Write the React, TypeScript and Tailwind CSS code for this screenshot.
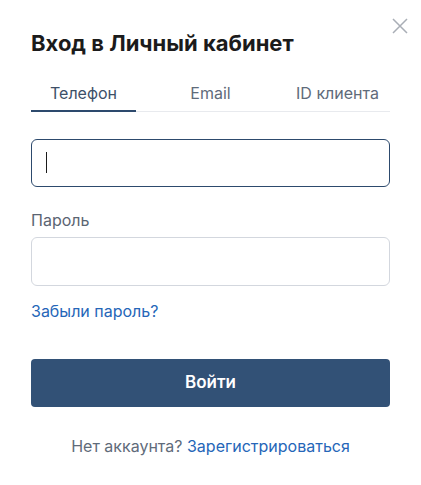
import React, { useState } from 'react';

type Tab = 'phone' | 'email' | 'id';

const tabs: { key: Tab; label: string }[] = [
  { key: 'phone', label: 'Телефон' },
  { key: 'email', label: 'Email' },
  { key: 'id', label: 'ID клиента' },
];

export default function App() {
  const [active, setActive] = useState<Tab>('phone');
  const [login, setLogin] = useState('');
  const [password, setPassword] = useState('');

  return (
    <div className="relative min-h-[485px] w-[421px] bg-white font-['Inter',sans-serif]">
      {/* Закрыть */}
      <button type="button" className="absolute right-[12px] top-[17px] p-[1px] text-[#a9aeb6]" aria-label="Закрыть">
        <svg width="16" height="16" viewBox="0 0 16 16" fill="none" stroke="currentColor" strokeWidth="1.5">
          <path d="M1 1l14 14M15 1L1 15" />
        </svg>
      </button>

      <div className="px-[31px] pt-[29px]">
        <h2 className="text-[22px] font-bold leading-[28px] text-[#1b1b1b]">Вход в Личный кабинет</h2>

        {/* Табы */}
        <div className="mt-[26px] flex justify-between border-b border-[#e8eaee]">
          {tabs.map(t => (
            <button
              key={t.key}
              type="button"
              onClick={() => setActive(t.key)}
              className={`-mb-px w-[105px] border-b-2 pb-[7px] text-[16px] leading-[20px] ${
                active === t.key ? 'border-[#2d4a6d] text-[#3d5068]' : 'border-transparent text-[#5f6b7a]'
              }`}
            >
              {t.label}
            </button>
          ))}
        </div>

        {/* Логин (в фокусе) */}
        <div className="relative mt-[27px]">
          <input
            type="text"
            value={login}
            onChange={e => setLogin(e.target.value)}
            className="block h-[48px] w-full rounded-[6px] border border-[#2d4a6d] px-[14px] text-[18px] text-[#1b1b1b] outline-none"
          />
          {!login && <span className="pointer-events-none absolute left-[15px] top-[13px] h-[21px] w-px bg-[#1b1b1b]" />}
        </div>

        <label className="mt-[23px] block text-[16px] leading-[20px] text-[#5b6572]">Пароль</label>
        <input
          type="password"
          value={password}
          onChange={e => setPassword(e.target.value)}
          className="mt-[7px] block h-[49px] w-full rounded-[6px] border border-[#d3d7de] px-[14px] text-[16px] outline-none"
        />

        <a href="#" className="mt-[15px] block w-fit text-[16px] leading-[20px] text-[#2566b8]">
          Забыли пароль?
        </a>

        <button
          type="button"
          className="mt-[38px] block h-[48px] w-full rounded-[4px] bg-[#325176] text-[17px] font-semibold text-white"
        >
          Войти
        </button>

        <p className="mt-[29px] text-center text-[16px] leading-[20px] text-[#5f6b7a]">
          Нет аккаунта? <a href="#" className="text-[#2566b8]">Зарегистрироваться</a>
        </p>
      </div>
    </div>
  );
}
